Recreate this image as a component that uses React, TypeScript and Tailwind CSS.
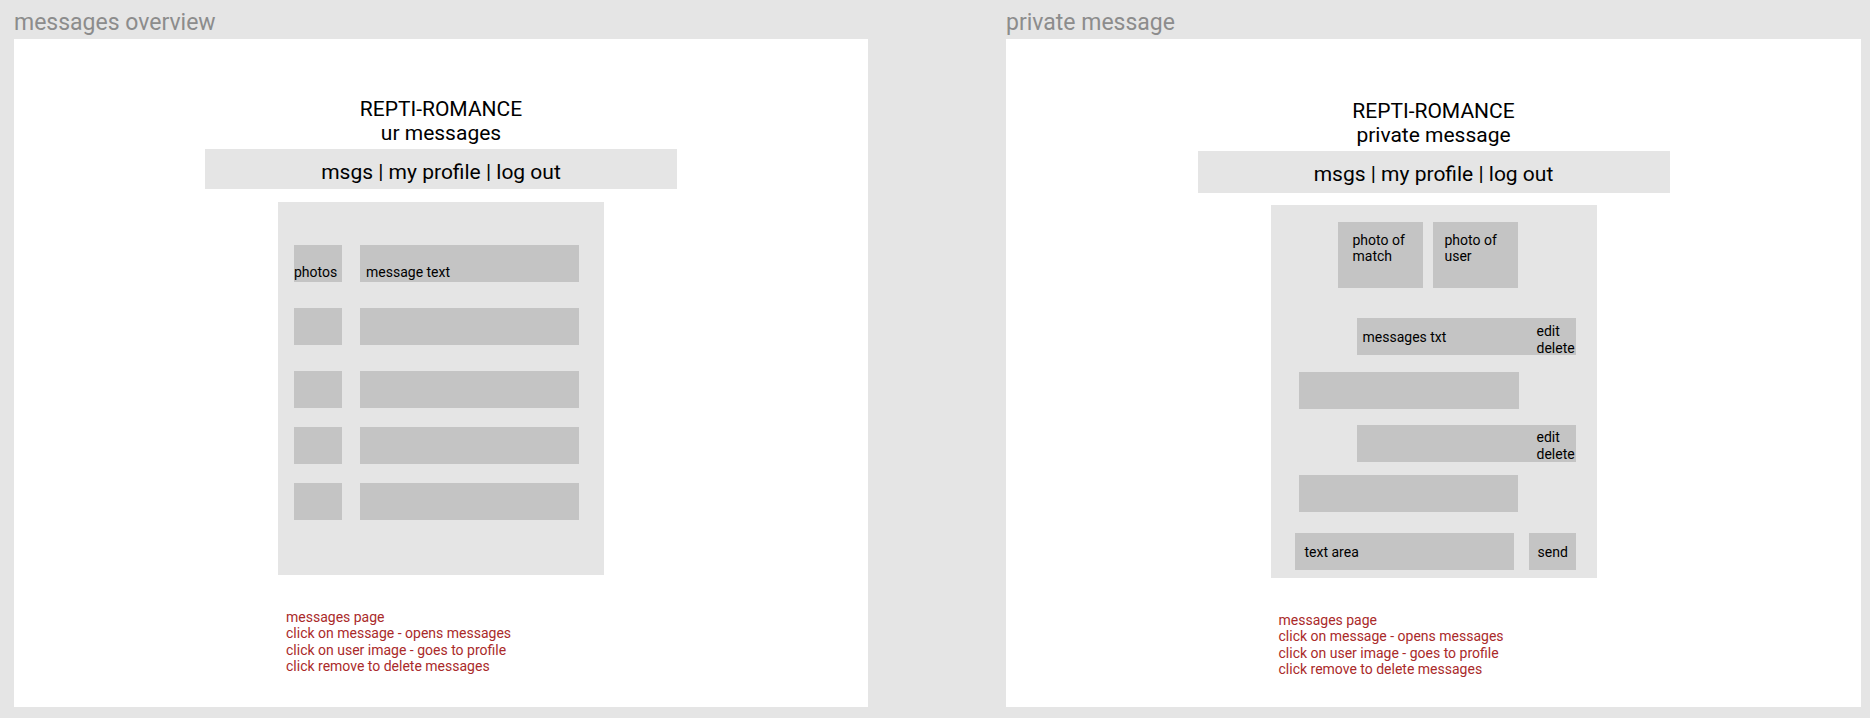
const notes = [
  "messages page",
  "click on message - opens messages",
  "click on user image - goes to profile",
  "click remove to delete messages",
];

const Header = ({
  subtitle,
  navClass,
}: {
  subtitle: string;
  navClass: string;
}) => {
  return (
    <>
      <div className="text-center text-[21px] leading-[24px] text-black">
        <div>REPTI-ROMANCE</div>
        <div>{subtitle}</div>
      </div>
      <div
        className={`mx-auto w-[472px] bg-[#e5e5e5] pt-[13px] text-center text-[21px] leading-[21px] text-black ${navClass}`}
      >
        msgs | my profile | log out
      </div>
    </>
  );
};

const Notes = () => {
  return (
    <div className="mx-auto mt-[34px] w-[326px] pl-[8px] text-[14px] leading-[16.3px] text-[#aa2a2a]">
      {notes.map((n) => (
        <div key={n}>{n}</div>
      ))}
    </div>
  );
};

// overview: list of conversations
const rowGaps = ["", "mt-[26px]", "mt-[26px]", "mt-[19px]", "mt-[19px]"];

const OverviewFrame = () => {
  return (
    <div className="flex h-[668px] w-[854px] flex-col bg-white pt-[58px]">
      <Header subtitle="ur messages" navClass="mt-[4px] h-[40px]" />

      <div className="mx-auto mt-[13px] flex h-[373px] w-[326px] flex-col bg-[#e5e5e5] pl-[16px] pt-[43px]">
        {rowGaps.map((gap, i) => (
          <div key={i} className={`flex h-[37px] gap-[18px] ${gap}`}>
            <div className="flex w-[48px] items-end bg-[#c4c4c4] pb-[2px] text-[14px] leading-[16px] text-black">
              {i === 0 ? "photos" : ""}
            </div>
            <div className="flex w-[219px] items-end bg-[#c4c4c4] pb-[2px] pl-[6px] text-[14px] leading-[16px] text-black">
              {i === 0 ? "message text" : ""}
            </div>
          </div>
        ))}
      </div>

      <Notes />
    </div>
  );
};

// single chat bubble, own messages can be edited
const Bubble = ({
  className,
  text,
  editable,
  editPad,
}: {
  className: string;
  text?: string;
  editable?: boolean;
  editPad?: string;
}) => {
  return (
    <div className={`flex h-[37px] bg-[#c4c4c4] text-[14px] leading-[16px] text-black ${className}`}>
      <div className="flex-1 self-center pl-[6px]">{text}</div>
      {editable && (
        <div className={`w-[39px] shrink-0 leading-[16.5px] ${editPad}`}>
          edit
          <br />
          delete
        </div>
      )}
    </div>
  );
};

const PrivateFrame = () => {
  return (
    <div className="flex h-[668px] w-[855px] flex-col bg-white pt-[60px]">
      <Header subtitle="private message" navClass="mt-[4px] h-[42px]" />

      <div className="mx-auto mt-[12px] flex h-[373px] w-[326px] flex-col bg-[#e5e5e5] pt-[17px]">
        <div className="flex gap-[10px] pl-[67px] text-[14px] leading-[16px] text-black">
          <div className="h-[66px] w-[85px] bg-[#c4c4c4] pl-[15px] pt-[10px]">
            photo of
            <br />
            match
          </div>
          <div className="h-[66px] w-[85px] bg-[#c4c4c4] pl-[12px] pt-[10px]">
            photo of
            <br />
            user
          </div>
        </div>

        <Bubble className="ml-[86px] mt-[30px] w-[219px]" text="messages txt" editable editPad="pt-[5px]" />
        <Bubble className="ml-[28px] mt-[17px] w-[220px]" />
        <Bubble className="ml-[86px] mt-[16px] w-[219px]" editable editPad="pt-[4px]" />
        <Bubble className="ml-[28px] mt-[13px] w-[219px]" />

        <div className="ml-[24px] mt-[21px] flex h-[37px] gap-[15px] text-[14px] leading-[16px] text-black">
          <div className="flex w-[219px] items-center bg-[#c4c4c4] pl-[10px]">text area</div>
          <div className="flex w-[47px] items-center bg-[#c4c4c4] pl-[9px]">send</div>
        </div>
      </div>

      <Notes />
    </div>
  );
};

const App = () => {
  return (
    <div className="flex h-[718px] w-[1870px] gap-[138px] overflow-hidden bg-[#e5e5e5] pl-[14px] pt-[9px] font-['Roboto',sans-serif]">
      <div className="flex flex-col">
        <div className="text-[23px] leading-[27px] text-[#8c8c8c]">messages overview</div>
        <div className="mt-[3px]">
          <OverviewFrame />
        </div>
      </div>
      <div className="flex flex-col">
        <div className="text-[23px] leading-[27px] text-[#8c8c8c]">private message</div>
        <div className="mt-[3px]">
          <PrivateFrame />
        </div>
      </div>
    </div>
  );
};

export default App;
